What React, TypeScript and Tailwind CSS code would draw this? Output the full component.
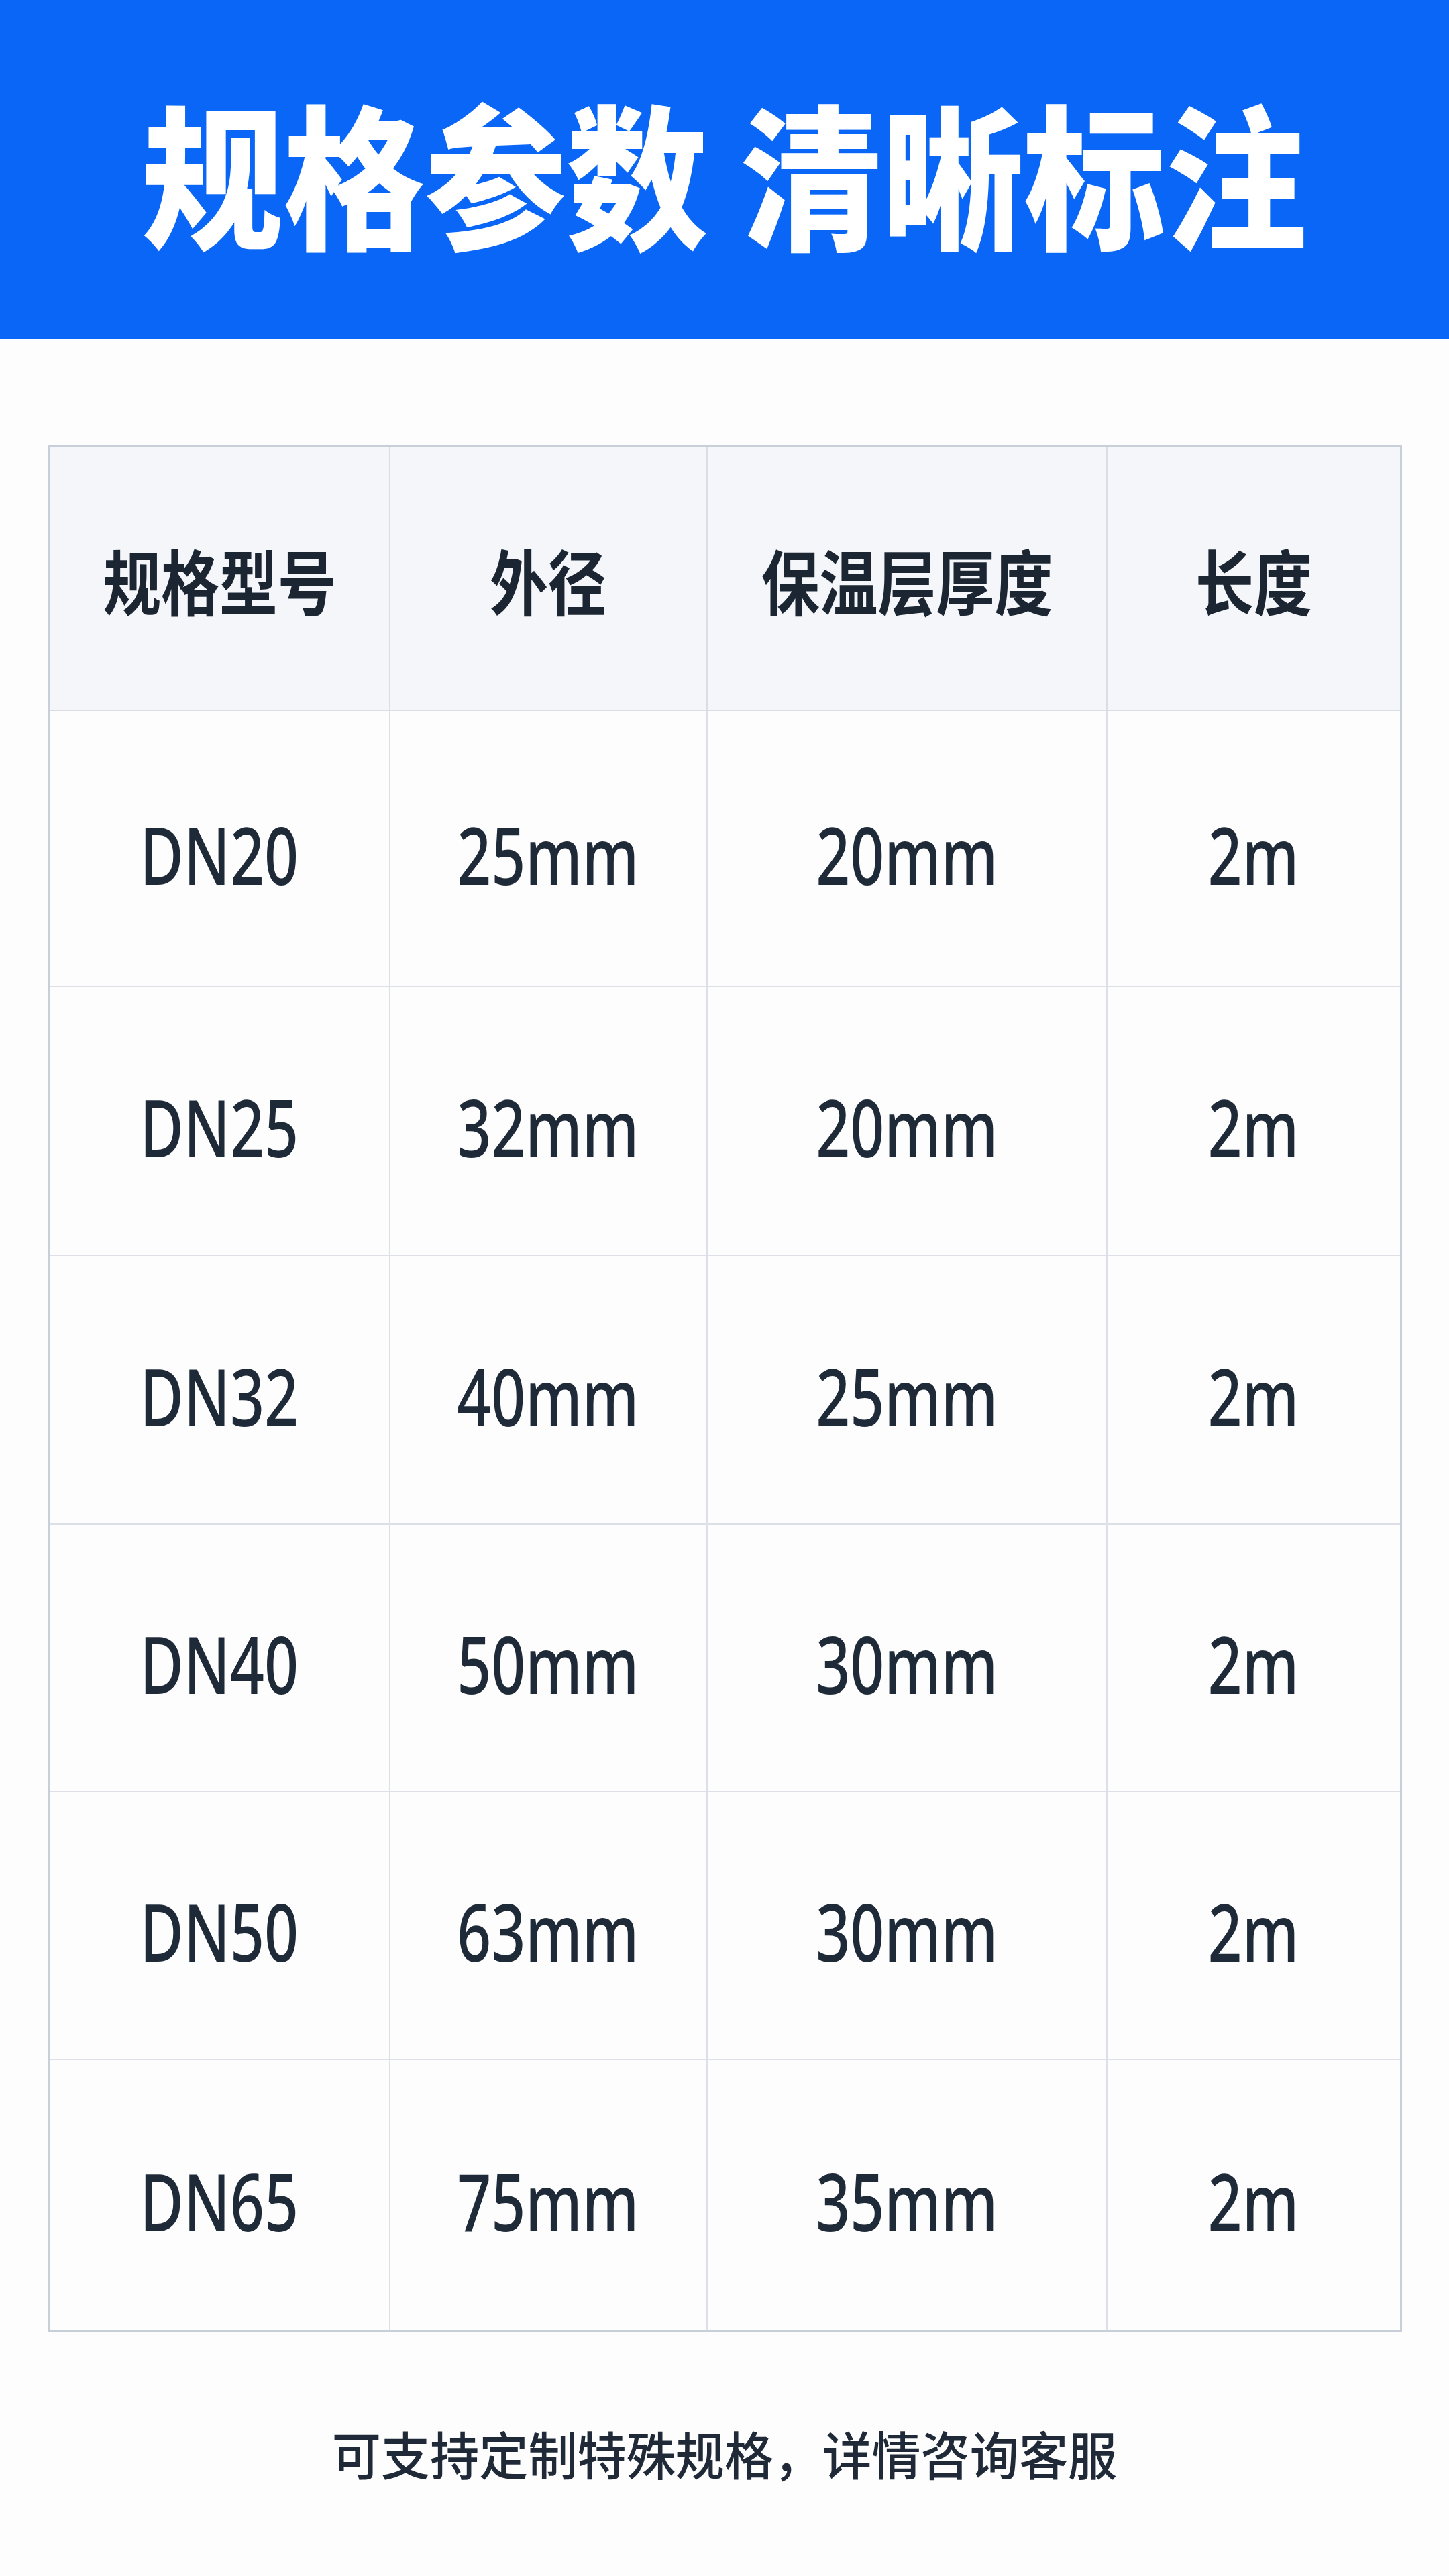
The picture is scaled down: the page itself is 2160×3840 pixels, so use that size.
import React from "react";

const rows = [
  ["DN20", "25mm", "20mm", "2m"],
  ["DN25", "32mm", "20mm", "2m"],
  ["DN32", "40mm", "25mm", "2m"],
  ["DN40", "50mm", "30mm", "2m"],
  ["DN50", "63mm", "30mm", "2m"],
  ["DN65", "75mm", "35mm", "2m"],
];

const rowH = ["h-[412px]", "h-[401px]", "h-[400px]", "h-[399px]", "h-[399px]", "h-[402px]"];

const heads = ["规格型号", "外径", "保温层厚度", "长度"];

const cjk = { fontFamily: '"Noto Sans CJK SC", "Noto Sans", sans-serif' };
const latin = { fontFamily: '"Noto Sans", "Noto Sans CJK SC", sans-serif' };

export default function App() {
  return (
    <div className="min-h-[3840px] w-[2160px] bg-[#fdfdfe] flex flex-col items-center">
      <div className="w-full h-[505px] bg-[#0a66f6] flex items-center justify-center">
        <span
          style={cjk}
          className="inline-block text-white font-black text-[232px] leading-none scale-x-[0.91] whitespace-pre"
        >
          规格参数 清晰标注
        </span>
      </div>

      <div className="mt-[159px] w-[2019px] border-[3px] border-[#c8cfd8] grid grid-cols-[508px_473px_596px_436px]">
        {heads.map((h, i) => (
          <div
            key={h}
            className={`h-[393px] bg-[#f4f6f9] border-b-2 border-[#d9dee5] flex items-center justify-center ${i < 3 ? "border-r-2" : ""}`}
          >
            <span
              style={cjk}
              className="inline-block font-bold text-[106px] leading-none text-[#1c2633] scale-x-[0.82]"
            >
              {h}
            </span>
          </div>
        ))}
        {rows.map((r, ri) =>
          r.map((c, ci) => (
            <div
              key={`${ri}-${ci}`}
              className={`${rowH[ri]} bg-[#fdfdfd] border-[#dde1e7] flex items-center justify-center ${ci < 3 ? "border-r-2" : ""} ${ri < 5 ? "border-b-2" : ""}`}
            >
              <span
                style={latin}
                className="inline-block font-medium text-[119px] leading-none text-[#1e2a38] scale-x-[0.75] translate-y-[8px]"
              >
                {c}
              </span>
            </div>
          ))
        )}
      </div>

      <div
        style={cjk}
        className="mt-[142px] text-[77px] leading-none font-medium text-[#1f2937] inline-block scale-x-[0.95]"
      >
        可支持定制特殊规格，详情咨询客服
      </div>
    </div>
  );
}
